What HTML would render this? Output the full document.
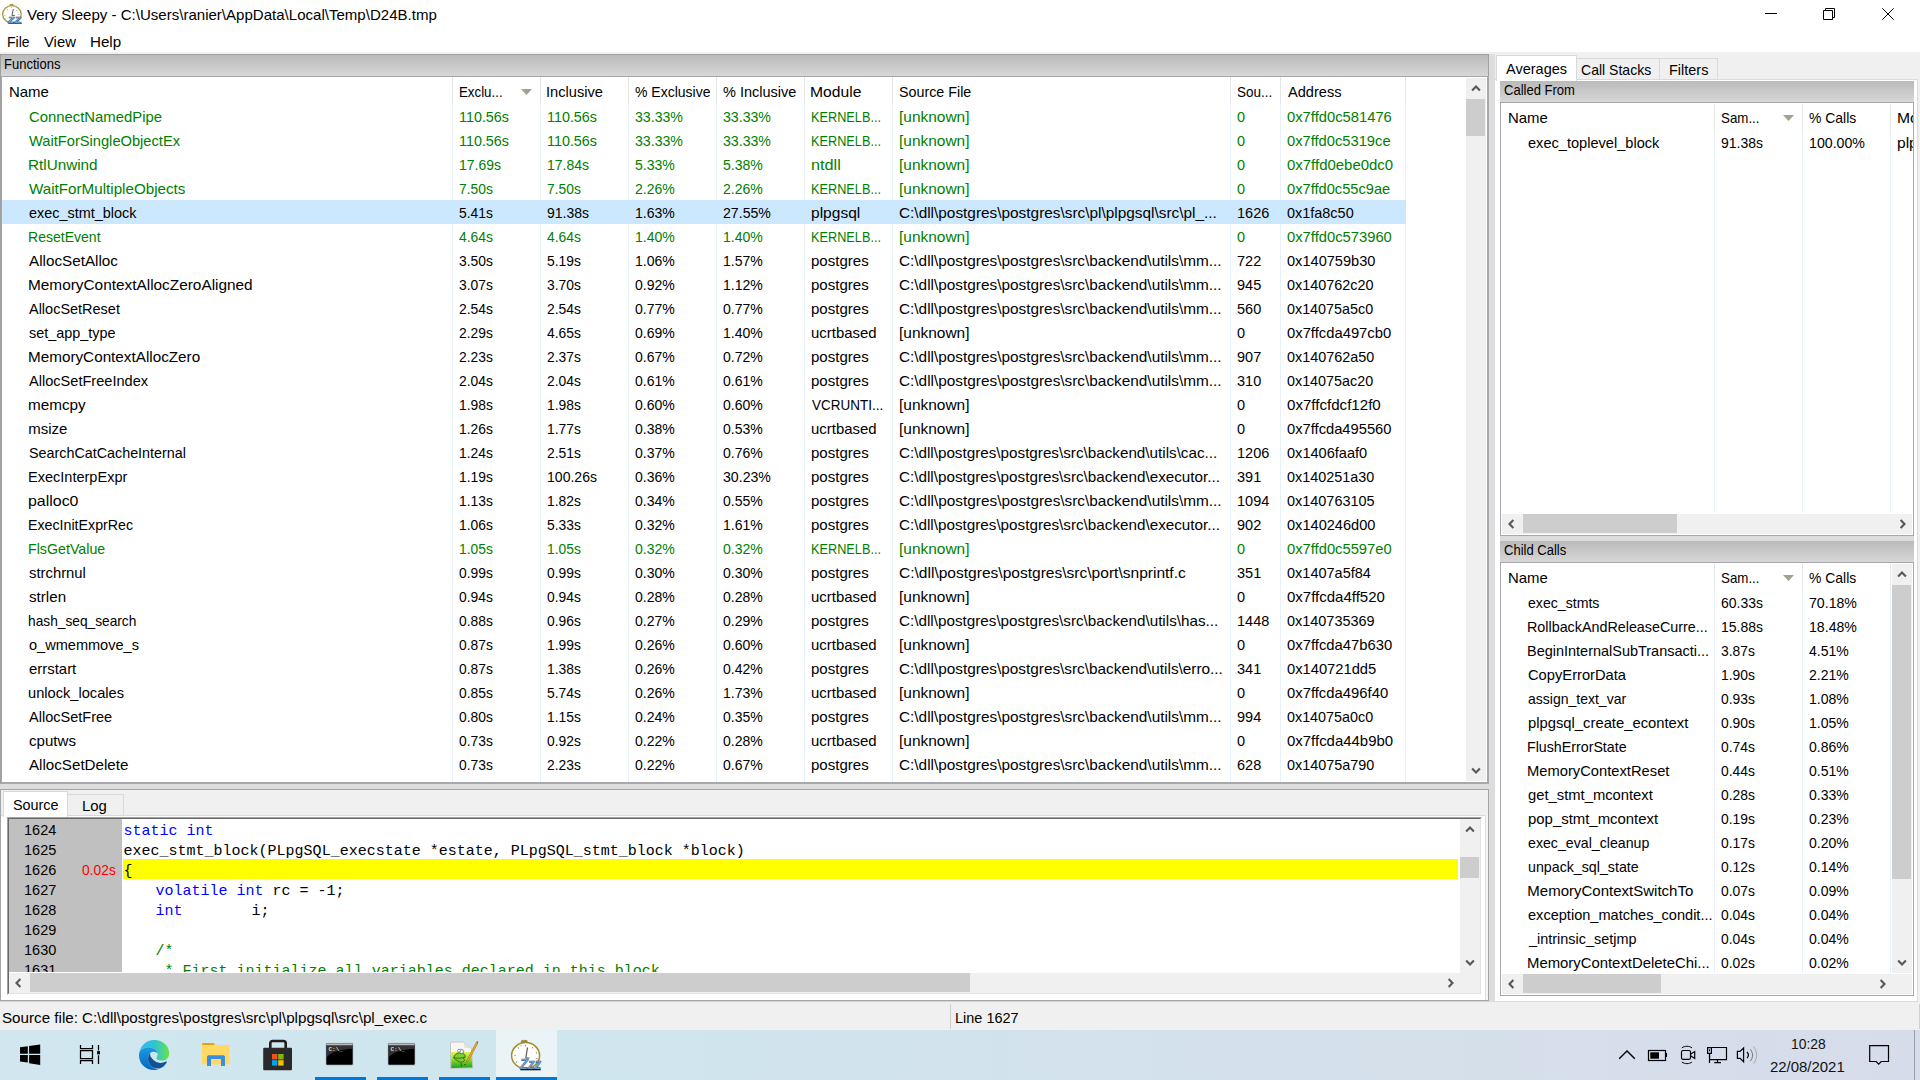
<!DOCTYPE html>
<html lang="en"><head><meta charset="utf-8"><title>Very Sleepy</title>
<style>
html,body{margin:0;padding:0;background:#fff;}
body{width:1920px;height:1080px;overflow:hidden;position:relative;font:15px/20px "Liberation Sans",sans-serif;color:#000;}
body div,body svg,body span{position:absolute;}
.t{white-space:pre;font-family:"Liberation Sans",sans-serif;line-height:20px;height:20px;transform-origin:0 0;}
.m{white-space:pre;font:15px/20px "Liberation Mono",monospace;height:20px;}
</style></head>
<body>
<div style="left:0px;top:0px;width:1920px;height:52px;background:#fff;"></div>
<svg style="left:1px;top:3px" width="22" height="22" viewBox="0 0 22 22">
<rect x="8.600" y="0.900" width="4" height="2.200" rx="1" fill="#9f963c"/>
<ellipse cx="10.900" cy="11.200" rx="9.300" ry="8.500" fill="#fff" stroke="#a3983a" stroke-width="1.200"/>
<path d="M10.900 12.400 L12.300 6 M10.900 12.400 L13.800 12.400" stroke="#5a5a5a" stroke-width="1" fill="none"/>
<g fill="#9a9a9a"><circle cx="6.300" cy="6.500" r=".5"/><circle cx="15.800" cy="7.500" r=".5"/><circle cx="3.800" cy="12.500" r=".5"/><circle cx="17.800" cy="11.500" r=".5"/><circle cx="10.500" cy="4.500" r=".5"/><circle cx="5" cy="15.500" r=".5"/></g>
<rect x="7.200" y="19.600" width="13.600" height="1.100" fill="#1a2232"/><text x="6.800" y="20.200" font-family="Liberation Sans,sans-serif" font-weight="bold" font-style="italic" font-size="11.500" textLength="13.600" lengthAdjust="spacingAndGlyphs" fill="#86bcec" stroke="#2a4468" stroke-width=".45">zz</text>
</svg>
<span class="t" style="left:27.23px;top:5.00px;transform:scaleX(1.0032);">Very Sleepy - C:\Users\ranier\AppData\Local\Temp\D24B.tmp</span>
<svg style="left:1760px;top:4px" width="140" height="20" viewBox="0 0 140 20" fill="none" stroke="#000" stroke-width="1">
<path d="M5 9.5h12"/>
<path d="M63.5 6.5h9v9h-9z M65.5 6.500v-2h9v9h-2"/>
<path d="M122.3 4.3l11.4 11.4 M133.7 4.3l-11.4 11.4"/>
</svg>
<span class="t" style="left:6.75px;top:32.00px;transform:scaleX(0.9343);">File</span>
<span class="t" style="left:43.93px;top:32.00px;transform:scaleX(0.9880);">View</span>
<span class="t" style="left:89.76px;top:32.00px;transform:scaleX(1.0101);">Help</span>
<div style="left:0px;top:52px;width:1920px;height:978px;background:#f0f0f0;"></div>
<div style="left:0px;top:54px;width:1489px;height:730px;background:#a0a0a0;"></div>
<div style="left:1px;top:55px;width:1487px;height:21px;background:linear-gradient(#bababa,#d7d7d7);"></div><span class="t" style="left:4.13px;top:54.00px;font-size:14px;transform:scaleX(0.9300);">Functions</span>
<div style="left:1px;top:76px;width:1488px;height:708px;background:#a6a8ac;"></div>
<div style="left:2px;top:77px;width:1485px;height:705px;background:#fff;"></div>
<div style="left:452px;top:77px;width:1px;height:27px;background:#e5e5e5;"></div>
<div style="left:452px;top:104px;width:1px;height:678px;background:#e8f1fb;"></div>
<div style="left:540px;top:77px;width:1px;height:27px;background:#e5e5e5;"></div>
<div style="left:540px;top:104px;width:1px;height:678px;background:#e8f1fb;"></div>
<div style="left:628px;top:77px;width:1px;height:27px;background:#e5e5e5;"></div>
<div style="left:628px;top:104px;width:1px;height:678px;background:#e8f1fb;"></div>
<div style="left:716px;top:77px;width:1px;height:27px;background:#e5e5e5;"></div>
<div style="left:716px;top:104px;width:1px;height:678px;background:#e8f1fb;"></div>
<div style="left:804px;top:77px;width:1px;height:27px;background:#e5e5e5;"></div>
<div style="left:804px;top:104px;width:1px;height:678px;background:#e8f1fb;"></div>
<div style="left:892px;top:77px;width:1px;height:27px;background:#e5e5e5;"></div>
<div style="left:892px;top:104px;width:1px;height:678px;background:#e8f1fb;"></div>
<div style="left:1230px;top:77px;width:1px;height:27px;background:#e5e5e5;"></div>
<div style="left:1230px;top:104px;width:1px;height:678px;background:#e8f1fb;"></div>
<div style="left:1280px;top:77px;width:1px;height:27px;background:#e5e5e5;"></div>
<div style="left:1280px;top:104px;width:1px;height:678px;background:#e8f1fb;"></div>
<div style="left:1405px;top:77px;width:1px;height:27px;background:#e5e5e5;"></div>
<div style="left:1405px;top:104px;width:1px;height:678px;background:#e8f1fb;"></div>
<span class="t" style="left:8.57px;top:82.00px;transform:scaleX(0.9966);">Name</span>
<span class="t" style="left:458.51px;top:82.00px;transform:scaleX(0.8860);">Exclu...</span>
<span class="t" style="left:546.25px;top:82.00px;transform:scaleX(0.9752);">Inclusive</span>
<span class="t" style="left:635.10px;top:82.00px;transform:scaleX(0.9329);">% Exclusive</span>
<span class="t" style="left:723.08px;top:82.00px;transform:scaleX(0.9676);">% Inclusive</span>
<span class="t" style="left:810.31px;top:82.00px;transform:scaleX(1.0445);">Module</span>
<span class="t" style="left:898.95px;top:82.00px;transform:scaleX(0.9525);">Source File</span>
<span class="t" style="left:1236.99px;top:82.00px;transform:scaleX(0.8992);">Sou...</span>
<span class="t" style="left:1287.57px;top:82.00px;transform:scaleX(0.9717);">Address</span>
<svg style="left:521px;top:89px" width="11" height="6" viewBox="0 0 11 6"><polygon points="0,0 11,0 5.5,6" fill="#a3a292"/></svg>
<span class="t" style="left:28.55px;top:107.00px;color:#008000;transform:scaleX(0.9908);">ConnectNamedPipe</span>
<span class="t" style="left:458.51px;top:107.00px;color:#008000;transform:scaleX(0.9569);">110.56s</span>
<span class="t" style="left:546.51px;top:107.00px;color:#008000;transform:scaleX(0.9569);">110.56s</span>
<span class="t" style="left:635.06px;top:107.00px;color:#008000;transform:scaleX(0.9415);">33.33%</span>
<span class="t" style="left:723.06px;top:107.00px;color:#008000;transform:scaleX(0.9415);">33.33%</span>
<span class="t" style="left:810.56px;top:107.00px;color:#008000;transform:scaleX(0.8481);">KERNELB...</span>
<span class="t" style="left:898.50px;top:107.00px;color:#008000;transform:scaleX(1.0314);">[unknown]</span>
<span class="t" style="left:1237.03px;top:107.00px;color:#008000;transform:scaleX(0.9669);">0</span>
<span class="t" style="left:1287.02px;top:107.00px;color:#008000;transform:scaleX(0.9845);">0x7ffd0c581476</span>
<span class="t" style="left:29.24px;top:131.00px;color:#008000;transform:scaleX(0.9775);">WaitForSingleObjectEx</span>
<span class="t" style="left:458.51px;top:131.00px;color:#008000;transform:scaleX(0.9569);">110.56s</span>
<span class="t" style="left:546.51px;top:131.00px;color:#008000;transform:scaleX(0.9569);">110.56s</span>
<span class="t" style="left:635.06px;top:131.00px;color:#008000;transform:scaleX(0.9415);">33.33%</span>
<span class="t" style="left:723.06px;top:131.00px;color:#008000;transform:scaleX(0.9415);">33.33%</span>
<span class="t" style="left:810.56px;top:131.00px;color:#008000;transform:scaleX(0.8481);">KERNELB...</span>
<span class="t" style="left:898.50px;top:131.00px;color:#008000;transform:scaleX(1.0314);">[unknown]</span>
<span class="t" style="left:1237.03px;top:131.00px;color:#008000;transform:scaleX(0.9669);">0</span>
<span class="t" style="left:1287.03px;top:131.00px;color:#008000;transform:scaleX(0.9805);">0x7ffd0c5319ce</span>
<span class="t" style="left:28.05px;top:155.00px;color:#008000;transform:scaleX(1.0172);">RtlUnwind</span>
<span class="t" style="left:458.54px;top:155.00px;color:#008000;transform:scaleX(0.9314);">17.69s</span>
<span class="t" style="left:546.54px;top:155.00px;color:#008000;transform:scaleX(0.9314);">17.84s</span>
<span class="t" style="left:635.04px;top:155.00px;color:#008000;transform:scaleX(0.9365);">5.33%</span>
<span class="t" style="left:723.04px;top:155.00px;color:#008000;transform:scaleX(0.9365);">5.38%</span>
<span class="t" style="left:810.52px;top:155.00px;color:#008000;transform:scaleX(1.0847);">ntdll</span>
<span class="t" style="left:898.50px;top:155.00px;color:#008000;transform:scaleX(1.0314);">[unknown]</span>
<span class="t" style="left:1237.03px;top:155.00px;color:#008000;transform:scaleX(0.9669);">0</span>
<span class="t" style="left:1287.02px;top:155.00px;color:#008000;transform:scaleX(0.9967);">0x7ffd0ebe0dc0</span>
<span class="t" style="left:29.23px;top:179.00px;color:#008000;transform:scaleX(1.0125);">WaitForMultipleObjects</span>
<span class="t" style="left:458.89px;top:179.00px;color:#008000;transform:scaleX(0.9233);">7.50s</span>
<span class="t" style="left:546.89px;top:179.00px;color:#008000;transform:scaleX(0.9233);">7.50s</span>
<span class="t" style="left:634.89px;top:179.00px;color:#008000;transform:scaleX(0.9365);">2.26%</span>
<span class="t" style="left:722.89px;top:179.00px;color:#008000;transform:scaleX(0.9365);">2.26%</span>
<span class="t" style="left:810.56px;top:179.00px;color:#008000;transform:scaleX(0.8481);">KERNELB...</span>
<span class="t" style="left:898.50px;top:179.00px;color:#008000;transform:scaleX(1.0314);">[unknown]</span>
<span class="t" style="left:1237.03px;top:179.00px;color:#008000;transform:scaleX(0.9669);">0</span>
<span class="t" style="left:1287.03px;top:179.00px;color:#008000;transform:scaleX(0.9770);">0x7ffd0c55c9ae</span>
<div style="left:2px;top:200px;width:1404px;height:24px;background:#cce8ff;"></div>
<span class="t" style="left:28.69px;top:203.00px;transform:scaleX(0.9613);">exec_stmt_block</span>
<span class="t" style="left:459.05px;top:203.00px;transform:scaleX(0.9233);">5.41s</span>
<span class="t" style="left:546.95px;top:203.00px;transform:scaleX(0.9314);">91.38s</span>
<span class="t" style="left:634.53px;top:203.00px;transform:scaleX(0.9365);">1.63%</span>
<span class="t" style="left:722.89px;top:203.00px;transform:scaleX(0.9415);">27.55%</span>
<span class="t" style="left:810.60px;top:203.00px;transform:scaleX(1.0359);">plpgsql</span>
<span class="t" style="left:898.82px;top:203.00px;transform:scaleX(1.0248);">C:\dll\postgres\postgres\src\pl\plpgsql\src\pl_...</span>
<span class="t" style="left:1236.50px;top:203.00px;transform:scaleX(0.9669);">1626</span>
<span class="t" style="left:1287.04px;top:203.00px;transform:scaleX(0.9630);">0x1fa8c50</span>
<span class="t" style="left:28.15px;top:227.00px;color:#008000;transform:scaleX(0.9357);">ResetEvent</span>
<span class="t" style="left:459.28px;top:227.00px;color:#008000;transform:scaleX(0.9233);">4.64s</span>
<span class="t" style="left:547.28px;top:227.00px;color:#008000;transform:scaleX(0.9233);">4.64s</span>
<span class="t" style="left:634.53px;top:227.00px;color:#008000;transform:scaleX(0.9365);">1.40%</span>
<span class="t" style="left:722.53px;top:227.00px;color:#008000;transform:scaleX(0.9365);">1.40%</span>
<span class="t" style="left:810.56px;top:227.00px;color:#008000;transform:scaleX(0.8481);">KERNELB...</span>
<span class="t" style="left:898.50px;top:227.00px;color:#008000;transform:scaleX(1.0314);">[unknown]</span>
<span class="t" style="left:1237.03px;top:227.00px;color:#008000;transform:scaleX(0.9669);">0</span>
<span class="t" style="left:1287.02px;top:227.00px;color:#008000;transform:scaleX(0.9845);">0x7ffd0c573960</span>
<span class="t" style="left:29.27px;top:251.00px;transform:scaleX(1.0159);">AllocSetAlloc</span>
<span class="t" style="left:459.07px;top:251.00px;transform:scaleX(0.9233);">3.50s</span>
<span class="t" style="left:547.05px;top:251.00px;transform:scaleX(0.9233);">5.19s</span>
<span class="t" style="left:634.53px;top:251.00px;transform:scaleX(0.9365);">1.06%</span>
<span class="t" style="left:722.53px;top:251.00px;transform:scaleX(0.9365);">1.57%</span>
<span class="t" style="left:810.63px;top:251.00px;transform:scaleX(1.0029);">postgres</span>
<span class="t" style="left:898.82px;top:251.00px;transform:scaleX(1.0237);">C:\dll\postgres\postgres\src\backend\utils\mm...</span>
<span class="t" style="left:1236.86px;top:251.00px;transform:scaleX(0.9669);">722</span>
<span class="t" style="left:1287.03px;top:251.00px;transform:scaleX(0.9723);">0x140759b30</span>
<span class="t" style="left:28.04px;top:275.00px;transform:scaleX(1.0246);">MemoryContextAllocZeroAligned</span>
<span class="t" style="left:459.07px;top:275.00px;transform:scaleX(0.9233);">3.07s</span>
<span class="t" style="left:547.07px;top:275.00px;transform:scaleX(0.9233);">3.70s</span>
<span class="t" style="left:635.05px;top:275.00px;transform:scaleX(0.9365);">0.92%</span>
<span class="t" style="left:722.53px;top:275.00px;transform:scaleX(0.9365);">1.12%</span>
<span class="t" style="left:810.63px;top:275.00px;transform:scaleX(1.0029);">postgres</span>
<span class="t" style="left:898.82px;top:275.00px;transform:scaleX(1.0237);">C:\dll\postgres\postgres\src\backend\utils\mm...</span>
<span class="t" style="left:1236.92px;top:275.00px;transform:scaleX(0.9669);">945</span>
<span class="t" style="left:1287.04px;top:275.00px;transform:scaleX(0.9603);">0x140762c20</span>
<span class="t" style="left:29.27px;top:299.00px;transform:scaleX(0.9652);">AllocSetReset</span>
<span class="t" style="left:458.90px;top:299.00px;transform:scaleX(0.9233);">2.54s</span>
<span class="t" style="left:546.90px;top:299.00px;transform:scaleX(0.9233);">2.54s</span>
<span class="t" style="left:635.05px;top:299.00px;transform:scaleX(0.9365);">0.77%</span>
<span class="t" style="left:723.05px;top:299.00px;transform:scaleX(0.9365);">0.77%</span>
<span class="t" style="left:810.63px;top:299.00px;transform:scaleX(1.0029);">postgres</span>
<span class="t" style="left:898.82px;top:299.00px;transform:scaleX(1.0237);">C:\dll\postgres\postgres\src\backend\utils\mm...</span>
<span class="t" style="left:1237.02px;top:299.00px;transform:scaleX(0.9669);">560</span>
<span class="t" style="left:1287.04px;top:299.00px;transform:scaleX(0.9561);">0x14075a5c0</span>
<span class="t" style="left:28.90px;top:323.00px;transform:scaleX(0.9608);">set_app_type</span>
<span class="t" style="left:458.90px;top:323.00px;transform:scaleX(0.9233);">2.29s</span>
<span class="t" style="left:547.28px;top:323.00px;transform:scaleX(0.9233);">4.65s</span>
<span class="t" style="left:635.05px;top:323.00px;transform:scaleX(0.9365);">0.69%</span>
<span class="t" style="left:722.53px;top:323.00px;transform:scaleX(0.9365);">1.40%</span>
<span class="t" style="left:810.63px;top:323.00px;transform:scaleX(0.9965);">ucrtbased</span>
<span class="t" style="left:898.50px;top:323.00px;transform:scaleX(1.0314);">[unknown]</span>
<span class="t" style="left:1237.03px;top:323.00px;transform:scaleX(0.9669);">0</span>
<span class="t" style="left:1287.02px;top:323.00px;transform:scaleX(0.9863);">0x7ffcda497cb0</span>
<span class="t" style="left:28.05px;top:347.00px;transform:scaleX(1.0175);">MemoryContextAllocZero</span>
<span class="t" style="left:458.90px;top:347.00px;transform:scaleX(0.9233);">2.23s</span>
<span class="t" style="left:546.90px;top:347.00px;transform:scaleX(0.9233);">2.37s</span>
<span class="t" style="left:635.05px;top:347.00px;transform:scaleX(0.9365);">0.67%</span>
<span class="t" style="left:723.05px;top:347.00px;transform:scaleX(0.9365);">0.72%</span>
<span class="t" style="left:810.63px;top:347.00px;transform:scaleX(1.0029);">postgres</span>
<span class="t" style="left:898.82px;top:347.00px;transform:scaleX(1.0237);">C:\dll\postgres\postgres\src\backend\utils\mm...</span>
<span class="t" style="left:1236.92px;top:347.00px;transform:scaleX(0.9669);">907</span>
<span class="t" style="left:1287.04px;top:347.00px;transform:scaleX(0.9592);">0x140762a50</span>
<span class="t" style="left:29.27px;top:371.00px;transform:scaleX(0.9716);">AllocSetFreeIndex</span>
<span class="t" style="left:458.90px;top:371.00px;transform:scaleX(0.9233);">2.04s</span>
<span class="t" style="left:546.90px;top:371.00px;transform:scaleX(0.9233);">2.04s</span>
<span class="t" style="left:635.05px;top:371.00px;transform:scaleX(0.9365);">0.61%</span>
<span class="t" style="left:723.05px;top:371.00px;transform:scaleX(0.9365);">0.61%</span>
<span class="t" style="left:810.63px;top:371.00px;transform:scaleX(1.0029);">postgres</span>
<span class="t" style="left:898.82px;top:371.00px;transform:scaleX(1.0237);">C:\dll\postgres\postgres\src\backend\utils\mm...</span>
<span class="t" style="left:1237.05px;top:371.00px;transform:scaleX(0.9669);">310</span>
<span class="t" style="left:1287.04px;top:371.00px;transform:scaleX(0.9561);">0x14075ac20</span>
<span class="t" style="left:28.29px;top:395.00px;transform:scaleX(1.0188);">memcpy</span>
<span class="t" style="left:458.55px;top:395.00px;transform:scaleX(0.9233);">1.98s</span>
<span class="t" style="left:546.55px;top:395.00px;transform:scaleX(0.9233);">1.98s</span>
<span class="t" style="left:635.05px;top:395.00px;transform:scaleX(0.9365);">0.60%</span>
<span class="t" style="left:723.05px;top:395.00px;transform:scaleX(0.9365);">0.60%</span>
<span class="t" style="left:811.54px;top:395.00px;transform:scaleX(0.8998);">VCRUNTI...</span>
<span class="t" style="left:898.50px;top:395.00px;transform:scaleX(1.0314);">[unknown]</span>
<span class="t" style="left:1237.03px;top:395.00px;transform:scaleX(0.9669);">0</span>
<span class="t" style="left:1287.01px;top:395.00px;transform:scaleX(1.0067);">0x7ffcfdcf12f0</span>
<span class="t" style="left:28.30px;top:419.00px;">msize</span>
<span class="t" style="left:458.55px;top:419.00px;transform:scaleX(0.9233);">1.26s</span>
<span class="t" style="left:546.55px;top:419.00px;transform:scaleX(0.9233);">1.77s</span>
<span class="t" style="left:635.05px;top:419.00px;transform:scaleX(0.9365);">0.38%</span>
<span class="t" style="left:723.05px;top:419.00px;transform:scaleX(0.9365);">0.53%</span>
<span class="t" style="left:810.63px;top:419.00px;transform:scaleX(0.9965);">ucrtbased</span>
<span class="t" style="left:898.50px;top:419.00px;transform:scaleX(1.0314);">[unknown]</span>
<span class="t" style="left:1237.03px;top:419.00px;transform:scaleX(0.9669);">0</span>
<span class="t" style="left:1287.03px;top:419.00px;transform:scaleX(0.9810);">0x7ffcda495560</span>
<span class="t" style="left:28.65px;top:443.00px;transform:scaleX(0.9552);">SearchCatCacheInternal</span>
<span class="t" style="left:458.55px;top:443.00px;transform:scaleX(0.9233);">1.24s</span>
<span class="t" style="left:546.90px;top:443.00px;transform:scaleX(0.9233);">2.51s</span>
<span class="t" style="left:635.05px;top:443.00px;transform:scaleX(0.9365);">0.37%</span>
<span class="t" style="left:723.05px;top:443.00px;transform:scaleX(0.9365);">0.76%</span>
<span class="t" style="left:810.63px;top:443.00px;transform:scaleX(1.0029);">postgres</span>
<span class="t" style="left:898.83px;top:443.00px;transform:scaleX(1.0153);">C:\dll\postgres\postgres\src\backend\utils\cac...</span>
<span class="t" style="left:1236.50px;top:443.00px;transform:scaleX(0.9669);">1206</span>
<span class="t" style="left:1287.03px;top:443.00px;transform:scaleX(0.9708);">0x1406faaf0</span>
<span class="t" style="left:28.11px;top:467.00px;transform:scaleX(0.9686);">ExecInterpExpr</span>
<span class="t" style="left:458.55px;top:467.00px;transform:scaleX(0.9233);">1.19s</span>
<span class="t" style="left:546.53px;top:467.00px;transform:scaleX(0.9369);">100.26s</span>
<span class="t" style="left:635.05px;top:467.00px;transform:scaleX(0.9365);">0.36%</span>
<span class="t" style="left:723.06px;top:467.00px;transform:scaleX(0.9415);">30.23%</span>
<span class="t" style="left:810.63px;top:467.00px;transform:scaleX(1.0029);">postgres</span>
<span class="t" style="left:898.83px;top:467.00px;transform:scaleX(1.0158);">C:\dll\postgres\postgres\src\backend\executor...</span>
<span class="t" style="left:1237.05px;top:467.00px;transform:scaleX(0.9669);">391</span>
<span class="t" style="left:1287.04px;top:467.00px;transform:scaleX(0.9592);">0x140251a30</span>
<span class="t" style="left:28.27px;top:491.00px;transform:scaleX(1.0613);">palloc0</span>
<span class="t" style="left:458.55px;top:491.00px;transform:scaleX(0.9233);">1.13s</span>
<span class="t" style="left:546.55px;top:491.00px;transform:scaleX(0.9233);">1.82s</span>
<span class="t" style="left:635.05px;top:491.00px;transform:scaleX(0.9365);">0.34%</span>
<span class="t" style="left:723.05px;top:491.00px;transform:scaleX(0.9365);">0.55%</span>
<span class="t" style="left:810.63px;top:491.00px;transform:scaleX(1.0029);">postgres</span>
<span class="t" style="left:898.82px;top:491.00px;transform:scaleX(1.0237);">C:\dll\postgres\postgres\src\backend\utils\mm...</span>
<span class="t" style="left:1236.50px;top:491.00px;transform:scaleX(0.9669);">1094</span>
<span class="t" style="left:1287.04px;top:491.00px;transform:scaleX(0.9634);">0x140763105</span>
<span class="t" style="left:28.13px;top:515.00px;transform:scaleX(0.9474);">ExecInitExprRec</span>
<span class="t" style="left:458.55px;top:515.00px;transform:scaleX(0.9233);">1.06s</span>
<span class="t" style="left:547.05px;top:515.00px;transform:scaleX(0.9233);">5.33s</span>
<span class="t" style="left:635.05px;top:515.00px;transform:scaleX(0.9365);">0.32%</span>
<span class="t" style="left:722.53px;top:515.00px;transform:scaleX(0.9365);">1.61%</span>
<span class="t" style="left:810.63px;top:515.00px;transform:scaleX(1.0029);">postgres</span>
<span class="t" style="left:898.83px;top:515.00px;transform:scaleX(1.0158);">C:\dll\postgres\postgres\src\backend\executor...</span>
<span class="t" style="left:1236.92px;top:515.00px;transform:scaleX(0.9669);">902</span>
<span class="t" style="left:1287.03px;top:515.00px;transform:scaleX(0.9723);">0x140246d00</span>
<span class="t" style="left:28.13px;top:539.00px;color:#008000;transform:scaleX(0.9481);">FlsGetValue</span>
<span class="t" style="left:458.55px;top:539.00px;color:#008000;transform:scaleX(0.9233);">1.05s</span>
<span class="t" style="left:546.55px;top:539.00px;color:#008000;transform:scaleX(0.9233);">1.05s</span>
<span class="t" style="left:635.05px;top:539.00px;color:#008000;transform:scaleX(0.9365);">0.32%</span>
<span class="t" style="left:723.05px;top:539.00px;color:#008000;transform:scaleX(0.9365);">0.32%</span>
<span class="t" style="left:810.56px;top:539.00px;color:#008000;transform:scaleX(0.8481);">KERNELB...</span>
<span class="t" style="left:898.50px;top:539.00px;color:#008000;transform:scaleX(1.0314);">[unknown]</span>
<span class="t" style="left:1237.03px;top:539.00px;color:#008000;transform:scaleX(0.9669);">0</span>
<span class="t" style="left:1287.02px;top:539.00px;color:#008000;transform:scaleX(0.9830);">0x7ffd0c5597e0</span>
<span class="t" style="left:28.89px;top:563.00px;transform:scaleX(0.9893);">strchrnul</span>
<span class="t" style="left:459.06px;top:563.00px;transform:scaleX(0.9233);">0.99s</span>
<span class="t" style="left:547.06px;top:563.00px;transform:scaleX(0.9233);">0.99s</span>
<span class="t" style="left:635.05px;top:563.00px;transform:scaleX(0.9365);">0.30%</span>
<span class="t" style="left:723.05px;top:563.00px;transform:scaleX(0.9365);">0.30%</span>
<span class="t" style="left:810.63px;top:563.00px;transform:scaleX(1.0029);">postgres</span>
<span class="t" style="left:898.81px;top:563.00px;transform:scaleX(1.0361);">C:\dll\postgres\postgres\src\port\snprintf.c</span>
<span class="t" style="left:1237.05px;top:563.00px;transform:scaleX(0.9669);">351</span>
<span class="t" style="left:1287.03px;top:563.00px;transform:scaleX(0.9669);">0x1407a5f84</span>
<span class="t" style="left:28.88px;top:587.00px;transform:scaleX(1.0116);">strlen</span>
<span class="t" style="left:459.06px;top:587.00px;transform:scaleX(0.9233);">0.94s</span>
<span class="t" style="left:547.06px;top:587.00px;transform:scaleX(0.9233);">0.94s</span>
<span class="t" style="left:635.05px;top:587.00px;transform:scaleX(0.9365);">0.28%</span>
<span class="t" style="left:723.05px;top:587.00px;transform:scaleX(0.9365);">0.28%</span>
<span class="t" style="left:810.63px;top:587.00px;transform:scaleX(0.9965);">ucrtbased</span>
<span class="t" style="left:898.50px;top:587.00px;transform:scaleX(1.0314);">[unknown]</span>
<span class="t" style="left:1237.03px;top:587.00px;transform:scaleX(0.9669);">0</span>
<span class="t" style="left:1287.01px;top:587.00px;">0x7ffcda4ff520</span>
<span class="t" style="left:28.35px;top:611.00px;transform:scaleX(0.9149);">hash_seq_search</span>
<span class="t" style="left:459.06px;top:611.00px;transform:scaleX(0.9233);">0.88s</span>
<span class="t" style="left:547.06px;top:611.00px;transform:scaleX(0.9233);">0.96s</span>
<span class="t" style="left:635.05px;top:611.00px;transform:scaleX(0.9365);">0.27%</span>
<span class="t" style="left:723.05px;top:611.00px;transform:scaleX(0.9365);">0.29%</span>
<span class="t" style="left:810.63px;top:611.00px;transform:scaleX(1.0029);">postgres</span>
<span class="t" style="left:898.83px;top:611.00px;transform:scaleX(1.0157);">C:\dll\postgres\postgres\src\backend\utils\has...</span>
<span class="t" style="left:1236.50px;top:611.00px;transform:scaleX(0.9669);">1448</span>
<span class="t" style="left:1287.04px;top:611.00px;transform:scaleX(0.9634);">0x140735369</span>
<span class="t" style="left:28.69px;top:635.00px;transform:scaleX(0.9697);">o_wmemmove_s</span>
<span class="t" style="left:459.06px;top:635.00px;transform:scaleX(0.9233);">0.87s</span>
<span class="t" style="left:546.55px;top:635.00px;transform:scaleX(0.9233);">1.99s</span>
<span class="t" style="left:635.05px;top:635.00px;transform:scaleX(0.9365);">0.26%</span>
<span class="t" style="left:723.05px;top:635.00px;transform:scaleX(0.9365);">0.60%</span>
<span class="t" style="left:810.63px;top:635.00px;transform:scaleX(0.9965);">ucrtbased</span>
<span class="t" style="left:898.50px;top:635.00px;transform:scaleX(1.0314);">[unknown]</span>
<span class="t" style="left:1237.03px;top:635.00px;transform:scaleX(0.9669);">0</span>
<span class="t" style="left:1287.02px;top:635.00px;transform:scaleX(0.9887);">0x7ffcda47b630</span>
<span class="t" style="left:28.67px;top:659.00px;transform:scaleX(0.9944);">errstart</span>
<span class="t" style="left:459.06px;top:659.00px;transform:scaleX(0.9233);">0.87s</span>
<span class="t" style="left:546.55px;top:659.00px;transform:scaleX(0.9233);">1.38s</span>
<span class="t" style="left:635.05px;top:659.00px;transform:scaleX(0.9365);">0.26%</span>
<span class="t" style="left:723.05px;top:659.00px;transform:scaleX(0.9365);">0.42%</span>
<span class="t" style="left:810.63px;top:659.00px;transform:scaleX(1.0029);">postgres</span>
<span class="t" style="left:898.82px;top:659.00px;transform:scaleX(1.0223);">C:\dll\postgres\postgres\src\backend\utils\erro...</span>
<span class="t" style="left:1237.05px;top:659.00px;transform:scaleX(0.9669);">341</span>
<span class="t" style="left:1287.03px;top:659.00px;transform:scaleX(0.9813);">0x140721dd5</span>
<span class="t" style="left:28.35px;top:683.00px;transform:scaleX(0.9754);">unlock_locales</span>
<span class="t" style="left:459.06px;top:683.00px;transform:scaleX(0.9233);">0.85s</span>
<span class="t" style="left:547.05px;top:683.00px;transform:scaleX(0.9233);">5.74s</span>
<span class="t" style="left:635.05px;top:683.00px;transform:scaleX(0.9365);">0.26%</span>
<span class="t" style="left:722.53px;top:683.00px;transform:scaleX(0.9365);">1.73%</span>
<span class="t" style="left:810.63px;top:683.00px;transform:scaleX(0.9965);">ucrtbased</span>
<span class="t" style="left:898.50px;top:683.00px;transform:scaleX(1.0314);">[unknown]</span>
<span class="t" style="left:1237.03px;top:683.00px;transform:scaleX(0.9669);">0</span>
<span class="t" style="left:1287.02px;top:683.00px;transform:scaleX(0.9884);">0x7ffcda496f40</span>
<span class="t" style="left:29.27px;top:707.00px;transform:scaleX(0.9686);">AllocSetFree</span>
<span class="t" style="left:459.06px;top:707.00px;transform:scaleX(0.9233);">0.80s</span>
<span class="t" style="left:546.55px;top:707.00px;transform:scaleX(0.9233);">1.15s</span>
<span class="t" style="left:635.05px;top:707.00px;transform:scaleX(0.9365);">0.24%</span>
<span class="t" style="left:723.05px;top:707.00px;transform:scaleX(0.9365);">0.35%</span>
<span class="t" style="left:810.63px;top:707.00px;transform:scaleX(1.0029);">postgres</span>
<span class="t" style="left:898.82px;top:707.00px;transform:scaleX(1.0237);">C:\dll\postgres\postgres\src\backend\utils\mm...</span>
<span class="t" style="left:1236.92px;top:707.00px;transform:scaleX(0.9669);">994</span>
<span class="t" style="left:1287.04px;top:707.00px;transform:scaleX(0.9561);">0x14075a0c0</span>
<span class="t" style="left:28.66px;top:731.00px;transform:scaleX(1.0065);">cputws</span>
<span class="t" style="left:459.06px;top:731.00px;transform:scaleX(0.9233);">0.73s</span>
<span class="t" style="left:547.06px;top:731.00px;transform:scaleX(0.9233);">0.92s</span>
<span class="t" style="left:635.05px;top:731.00px;transform:scaleX(0.9365);">0.22%</span>
<span class="t" style="left:723.05px;top:731.00px;transform:scaleX(0.9365);">0.28%</span>
<span class="t" style="left:810.63px;top:731.00px;transform:scaleX(0.9965);">ucrtbased</span>
<span class="t" style="left:898.50px;top:731.00px;transform:scaleX(1.0314);">[unknown]</span>
<span class="t" style="left:1237.03px;top:731.00px;transform:scaleX(0.9669);">0</span>
<span class="t" style="left:1287.02px;top:731.00px;transform:scaleX(0.9963);">0x7ffcda44b9b0</span>
<span class="t" style="left:29.27px;top:755.00px;transform:scaleX(1.0103);">AllocSetDelete</span>
<span class="t" style="left:459.06px;top:755.00px;transform:scaleX(0.9233);">0.73s</span>
<span class="t" style="left:546.90px;top:755.00px;transform:scaleX(0.9233);">2.23s</span>
<span class="t" style="left:635.05px;top:755.00px;transform:scaleX(0.9365);">0.22%</span>
<span class="t" style="left:723.05px;top:755.00px;transform:scaleX(0.9365);">0.67%</span>
<span class="t" style="left:810.63px;top:755.00px;transform:scaleX(1.0029);">postgres</span>
<span class="t" style="left:898.82px;top:755.00px;transform:scaleX(1.0237);">C:\dll\postgres\postgres\src\backend\utils\mm...</span>
<span class="t" style="left:1236.86px;top:755.00px;transform:scaleX(0.9669);">628</span>
<span class="t" style="left:1287.04px;top:755.00px;transform:scaleX(0.9592);">0x14075a790</span>
<div style="left:1466px;top:78px;width:20px;height:703px;background:#f0f0f0;"></div><div style="left:1466px;top:99px;width:19px;height:37px;background:#cdcdcd;"></div><svg style="left:1470.7px;top:85.0px" width="10" height="7" viewBox="0 0 10 7"><polyline points="1.1,5.4 5,1.5000000000000004 8.9,5.4" fill="none" stroke="#585858" stroke-width="2.1"/></svg><svg style="left:1470.7px;top:767.0px" width="10" height="7" viewBox="0 0 10 7"><polyline points="1.1,1.6 5,5.5 8.9,1.6" fill="none" stroke="#585858" stroke-width="2.1"/></svg>
<div style="left:0px;top:784px;width:1489px;height:5px;background:#dddddd;"></div>
<div style="left:1489px;top:54px;width:6px;height:948px;background:#dddddd;"></div>
<div style="left:0px;top:789px;width:1489px;height:212px;background:#f0f0f0;border:1px solid #a5a5a5;box-sizing:border-box;"></div>
<div style="left:1px;top:815px;width:1487px;height:185px;background:#fff;border-top:1px solid #dcdcdc;box-sizing:border-box;"></div>
<div style="left:67px;top:794px;width:57px;height:22px;background:#f0f0f0;border:1px solid #d9d9d9;box-sizing:border-box;"></div>
<div style="left:3px;top:791px;width:65px;height:26px;background:#fff;border:1px solid #d9d9d9;border-bottom:none;box-sizing:border-box;"></div>
<div style="left:1485px;top:815px;width:1px;height:185px;background:#dedede;"></div>
<div style="left:1486px;top:815px;width:2px;height:185px;background:#f6f6f6;"></div>
<span class="t" style="left:12.65px;top:795.00px;transform:scaleX(0.9582);">Source</span>
<span class="t" style="left:81.58px;top:796.00px;transform:scaleX(0.9928);">Log</span>
<div style="left:7px;top:817px;width:1475px;height:178px;background:#fff;border:1px solid #fff;border-top-color:#a0a0a0;border-left-color:#a0a0a0;box-sizing:border-box;"></div>
<div style="left:8px;top:818px;width:1473px;height:176px;background:#fff;border:1px solid #e3e3e3;border-top-color:#696969;border-left-color:#696969;box-sizing:border-box;"></div>
<div style="left:9px;top:819px;width:113px;height:153px;background:#c0c0c0;"></div>
<div style="left:123px;top:859px;width:1335px;height:20px;background:#ffff00;"></div>
<div style="left:9px;top:819px;width:1451px;height:153px;overflow:hidden"><span class="t" style="left:15.20px;top:1.00px;transform:scaleX(0.9669);">1624</span><span class="m" style="left:114.6px;top:3.0px;color:#0000ff">static int</span><span class="t" style="left:15.20px;top:21.00px;transform:scaleX(0.9669);">1625</span><span class="m" style="left:114.6px;top:23.0px;color:#000">exec_stmt_block(PLpgSQL_execstate *estate, PLpgSQL_stmt_block *block)</span><span class="t" style="left:15.20px;top:41.00px;transform:scaleX(0.9669);">1626</span><span class="t" style="left:73.06px;top:41.00px;color:#ff0000;transform:scaleX(0.9233);">0.02s</span><span class="m" style="left:114.6px;top:43.0px;color:#000">{</span><span class="t" style="left:15.20px;top:61.00px;transform:scaleX(0.9669);">1627</span><span class="m" style="left:146.6px;top:63.0px;color:#0000ff">volatile int</span><span class="m" style="left:254.6px;top:63.0px;color:#000"> rc = -1;</span><span class="t" style="left:15.20px;top:81.00px;transform:scaleX(0.9669);">1628</span><span class="m" style="left:146.6px;top:83.0px;color:#0000ff">int</span><span class="m" style="left:242.6px;top:83.0px;color:#000">i;</span><span class="t" style="left:15.20px;top:101.00px;transform:scaleX(0.9669);">1629</span><span class="t" style="left:15.20px;top:121.00px;transform:scaleX(0.9669);">1630</span><span class="m" style="left:146.6px;top:123.0px;color:#008000">/*</span><span class="t" style="left:15.20px;top:141.00px;transform:scaleX(0.9669);">1631</span><span class="m" style="left:146.6px;top:143.0px;color:#008000"> * First initialize all variables declared in this block</span></div>
<div style="left:1460px;top:819px;width:20px;height:154px;background:#f0f0f0;"></div><div style="left:1460px;top:857px;width:19px;height:21px;background:#cdcdcd;"></div><svg style="left:1464.7px;top:826.0px" width="10" height="7" viewBox="0 0 10 7"><polyline points="1.1,5.4 5,1.5000000000000004 8.9,5.4" fill="none" stroke="#585858" stroke-width="2.1"/></svg><svg style="left:1464.7px;top:959.0px" width="10" height="7" viewBox="0 0 10 7"><polyline points="1.1,1.6 5,5.5 8.9,1.6" fill="none" stroke="#585858" stroke-width="2.1"/></svg>
<div style="left:9px;top:973px;width:1451px;height:20px;background:#f0f0f0;"></div><div style="left:30px;top:973px;width:940px;height:19px;background:#cdcdcd;"></div><svg style="left:15.2px;top:977.7px" width="7" height="10" viewBox="0 0 7 10"><polyline points="5.4,1.1 1.5000000000000004,5 5.4,8.9" fill="none" stroke="#585858" stroke-width="2.1"/></svg><svg style="left:1446.8px;top:977.7px" width="7" height="10" viewBox="0 0 7 10"><polyline points="1.6,1.1 5.5,5 1.6,8.9" fill="none" stroke="#585858" stroke-width="2.1"/></svg>
<div style="left:1460px;top:973px;width:20px;height:20px;background:#f0f0f0;"></div>
<div style="left:1495px;top:54px;width:425px;height:948px;background:#f0f0f0;"></div>
<div style="left:1495px;top:79px;width:423px;height:923px;background:#fff;border:1px solid #dcdcdc;border-left:none;box-sizing:border-box;"></div>
<div style="left:1576px;top:58px;width:84px;height:22px;background:#f0f0f0;border:1px solid #d9d9d9;box-sizing:border-box;"></div>
<div style="left:1659px;top:58px;width:59px;height:22px;background:#f0f0f0;border:1px solid #d9d9d9;box-sizing:border-box;"></div>
<div style="left:1496px;top:55px;width:81px;height:26px;background:#fff;border:1px solid #d9d9d9;border-bottom:none;box-sizing:border-box;"></div>
<span class="t" style="left:1506.07px;top:59.00px;transform:scaleX(0.9669);">Averages</span>
<span class="t" style="left:1581.49px;top:60.00px;transform:scaleX(0.9358);">Call Stacks</span>
<span class="t" style="left:1668.51px;top:60.00px;transform:scaleX(0.9640);">Filters</span>
<div style="left:1500px;top:81px;width:414px;height:455px;background:#a6a8ac;"></div><div style="left:1500px;top:81px;width:414px;height:21px;background:linear-gradient(#bababa,#d7d7d7);"></div><span class="t" style="left:1503.64px;top:80.00px;font-size:14px;transform:scaleX(0.9300);">Called From</span><div style="left:1501px;top:103px;width:412px;height:432px;background:#fff;"></div>
<div style="left:1501px;top:103px;width:412px;height:410px;overflow:hidden">
<div style="left:213px;top:1px;width:1px;height:26px;background:#e5e5e5;"></div>
<div style="left:213px;top:27px;width:1px;height:400px;background:#e8f1fb;"></div>
<div style="left:301px;top:1px;width:1px;height:26px;background:#e5e5e5;"></div>
<div style="left:301px;top:27px;width:1px;height:400px;background:#e8f1fb;"></div>
<div style="left:389px;top:1px;width:1px;height:26px;background:#e5e5e5;"></div>
<div style="left:389px;top:27px;width:1px;height:400px;background:#e8f1fb;"></div>
<span class="t" style="left:6.67px;top:5.00px;transform:scaleX(0.9966);">Name</span>
<span class="t" style="left:219.99px;top:5.00px;transform:scaleX(0.8890);">Sam...</span>
<span class="t" style="left:308.30px;top:5.00px;transform:scaleX(0.9293);">% Calls</span>
<span class="t" style="left:395.51px;top:5.00px;transform:scaleX(1.0445);">Module</span>
<svg style="left:282px;top:12px" width="11" height="6" viewBox="0 0 11 6"><polygon points="0,0 11,0 5.5,6" fill="#a3a292"/></svg>
<span class="t" style="left:26.98px;top:30.00px;transform:scaleX(0.9721);">exec_toplevel_block</span>
<span class="t" style="left:219.95px;top:30.00px;transform:scaleX(0.9314);">91.38s</span>
<span class="t" style="left:307.52px;top:30.00px;transform:scaleX(0.9451);">100.00%</span>
<span class="t" style="left:395.60px;top:30.00px;transform:scaleX(1.0359);">plpgsql</span>
</div>
<div style="left:1502px;top:514px;width:410px;height:20px;background:#f0f0f0;"></div><div style="left:1523px;top:514px;width:154px;height:19px;background:#cdcdcd;"></div><svg style="left:1508.2px;top:518.7px" width="7" height="10" viewBox="0 0 7 10"><polyline points="5.4,1.1 1.5000000000000004,5 5.4,8.9" fill="none" stroke="#585858" stroke-width="2.1"/></svg><svg style="left:1898.8px;top:518.7px" width="7" height="10" viewBox="0 0 7 10"><polyline points="1.6,1.1 5.5,5 1.6,8.9" fill="none" stroke="#585858" stroke-width="2.1"/></svg>
<div style="left:1502px;top:534px;width:410px;height:1px;background:#fff;"></div>
<div style="left:1500px;top:536px;width:414px;height:5px;background:#dcdcdc;"></div>
<div style="left:1500px;top:541px;width:414px;height:455px;background:#a6a8ac;"></div><div style="left:1500px;top:541px;width:414px;height:21px;background:linear-gradient(#bababa,#d7d7d7);"></div><span class="t" style="left:1503.64px;top:540.00px;font-size:14px;transform:scaleX(0.9300);">Child Calls</span><div style="left:1501px;top:563px;width:412px;height:432px;background:#fff;"></div>
<div style="left:1501px;top:563px;width:391px;height:410px;overflow:hidden">
<div style="left:213px;top:1px;width:1px;height:26px;background:#e5e5e5;"></div>
<div style="left:213px;top:27px;width:1px;height:400px;background:#e8f1fb;"></div>
<div style="left:301px;top:1px;width:1px;height:26px;background:#e5e5e5;"></div>
<div style="left:301px;top:27px;width:1px;height:400px;background:#e8f1fb;"></div>
<div style="left:389px;top:1px;width:1px;height:26px;background:#e5e5e5;"></div>
<div style="left:389px;top:27px;width:1px;height:400px;background:#e8f1fb;"></div>
<span class="t" style="left:6.67px;top:5.00px;transform:scaleX(0.9966);">Name</span>
<span class="t" style="left:219.99px;top:5.00px;transform:scaleX(0.8890);">Sam...</span>
<span class="t" style="left:308.30px;top:5.00px;transform:scaleX(0.9293);">% Calls</span>
<svg style="left:282px;top:12px" width="11" height="6" viewBox="0 0 11 6"><polygon points="0,0 11,0 5.5,6" fill="#a3a292"/></svg>
<span class="t" style="left:27.00px;top:30.00px;transform:scaleX(0.9414);">exec_stmts</span>
<span class="t" style="left:219.89px;top:30.00px;transform:scaleX(0.9314);">60.33s</span>
<span class="t" style="left:307.88px;top:30.00px;transform:scaleX(0.9415);">70.18%</span>
<span class="t" style="left:26.43px;top:54.00px;transform:scaleX(0.9547);">RollbackAndReleaseCurre...</span>
<span class="t" style="left:219.54px;top:54.00px;transform:scaleX(0.9314);">15.88s</span>
<span class="t" style="left:307.52px;top:54.00px;transform:scaleX(0.9415);">18.48%</span>
<span class="t" style="left:26.41px;top:78.00px;transform:scaleX(0.9644);">BeginInternalSubTransacti...</span>
<span class="t" style="left:220.07px;top:78.00px;transform:scaleX(0.9233);">3.87s</span>
<span class="t" style="left:308.28px;top:78.00px;transform:scaleX(0.9365);">4.51%</span>
<span class="t" style="left:26.85px;top:102.00px;transform:scaleX(0.9801);">CopyErrorData</span>
<span class="t" style="left:219.55px;top:102.00px;transform:scaleX(0.9233);">1.90s</span>
<span class="t" style="left:307.89px;top:102.00px;transform:scaleX(0.9365);">2.21%</span>
<span class="t" style="left:27.00px;top:126.00px;transform:scaleX(0.9340);">assign_text_var</span>
<span class="t" style="left:220.06px;top:126.00px;transform:scaleX(0.9233);">0.93s</span>
<span class="t" style="left:307.53px;top:126.00px;transform:scaleX(0.9365);">1.08%</span>
<span class="t" style="left:26.65px;top:150.00px;transform:scaleX(0.9861);">plpgsql_create_econtext</span>
<span class="t" style="left:220.06px;top:150.00px;transform:scaleX(0.9233);">0.90s</span>
<span class="t" style="left:307.53px;top:150.00px;transform:scaleX(0.9365);">1.05%</span>
<span class="t" style="left:26.43px;top:174.00px;transform:scaleX(0.9482);">FlushErrorState</span>
<span class="t" style="left:220.06px;top:174.00px;transform:scaleX(0.9233);">0.74s</span>
<span class="t" style="left:308.05px;top:174.00px;transform:scaleX(0.9365);">0.86%</span>
<span class="t" style="left:26.39px;top:198.00px;transform:scaleX(0.9818);">MemoryContextReset</span>
<span class="t" style="left:220.06px;top:198.00px;transform:scaleX(0.9233);">0.44s</span>
<span class="t" style="left:308.05px;top:198.00px;transform:scaleX(0.9365);">0.51%</span>
<span class="t" style="left:26.98px;top:222.00px;transform:scaleX(0.9850);">get_stmt_mcontext</span>
<span class="t" style="left:220.06px;top:222.00px;transform:scaleX(0.9233);">0.28s</span>
<span class="t" style="left:308.05px;top:222.00px;transform:scaleX(0.9365);">0.33%</span>
<span class="t" style="left:26.64px;top:246.00px;transform:scaleX(0.9944);">pop_stmt_mcontext</span>
<span class="t" style="left:220.06px;top:246.00px;transform:scaleX(0.9233);">0.19s</span>
<span class="t" style="left:308.05px;top:246.00px;transform:scaleX(0.9365);">0.23%</span>
<span class="t" style="left:27.00px;top:270.00px;transform:scaleX(0.9444);">exec_eval_cleanup</span>
<span class="t" style="left:220.06px;top:270.00px;transform:scaleX(0.9233);">0.17s</span>
<span class="t" style="left:308.05px;top:270.00px;transform:scaleX(0.9365);">0.20%</span>
<span class="t" style="left:26.68px;top:294.00px;transform:scaleX(0.9478);">unpack_sql_state</span>
<span class="t" style="left:220.06px;top:294.00px;transform:scaleX(0.9233);">0.12s</span>
<span class="t" style="left:308.05px;top:294.00px;transform:scaleX(0.9365);">0.14%</span>
<span class="t" style="left:26.37px;top:318.00px;">MemoryContextSwitchTo</span>
<span class="t" style="left:220.06px;top:318.00px;transform:scaleX(0.9233);">0.07s</span>
<span class="t" style="left:308.05px;top:318.00px;transform:scaleX(0.9365);">0.09%</span>
<span class="t" style="left:26.98px;top:342.00px;transform:scaleX(0.9707);">exception_matches_condit...</span>
<span class="t" style="left:220.06px;top:342.00px;transform:scaleX(0.9233);">0.04s</span>
<span class="t" style="left:308.05px;top:342.00px;transform:scaleX(0.9365);">0.04%</span>
<span class="t" style="left:27.82px;top:366.00px;transform:scaleX(0.9622);">_intrinsic_setjmp</span>
<span class="t" style="left:220.06px;top:366.00px;transform:scaleX(0.9233);">0.04s</span>
<span class="t" style="left:308.05px;top:366.00px;transform:scaleX(0.9365);">0.04%</span>
<span class="t" style="left:26.38px;top:390.00px;transform:scaleX(0.9915);">MemoryContextDeleteChi...</span>
<span class="t" style="left:220.06px;top:390.00px;transform:scaleX(0.9233);">0.02s</span>
<span class="t" style="left:308.05px;top:390.00px;transform:scaleX(0.9365);">0.02%</span>
</div>
<div style="left:1892px;top:564px;width:20px;height:409px;background:#f0f0f0;"></div><div style="left:1892px;top:585px;width:19px;height:294px;background:#cdcdcd;"></div><svg style="left:1896.7px;top:571.0px" width="10" height="7" viewBox="0 0 10 7"><polyline points="1.1,5.4 5,1.5000000000000004 8.9,5.4" fill="none" stroke="#585858" stroke-width="2.1"/></svg><svg style="left:1896.7px;top:959.0px" width="10" height="7" viewBox="0 0 10 7"><polyline points="1.1,1.6 5,5.5 8.9,1.6" fill="none" stroke="#585858" stroke-width="2.1"/></svg>
<div style="left:1502px;top:974px;width:390px;height:20px;background:#f0f0f0;"></div><div style="left:1523px;top:974px;width:138px;height:19px;background:#cdcdcd;"></div><svg style="left:1508.2px;top:978.7px" width="7" height="10" viewBox="0 0 7 10"><polyline points="5.4,1.1 1.5000000000000004,5 5.4,8.9" fill="none" stroke="#585858" stroke-width="2.1"/></svg><svg style="left:1878.8px;top:978.7px" width="7" height="10" viewBox="0 0 7 10"><polyline points="1.6,1.1 5.5,5 1.6,8.9" fill="none" stroke="#585858" stroke-width="2.1"/></svg>
<div style="left:1892px;top:974px;width:20px;height:20px;background:#f0f0f0;"></div>
<div style="left:0px;top:1002px;width:1920px;height:28px;background:#f0f0f0;"></div>
<div style="left:0px;top:1001px;width:1489px;height:1px;background:#d4d4d4;"></div>
<span class="t" style="left:2.11px;top:1008.00px;transform:scaleX(1.0115);">Source file: C:\dll\postgres\postgres\src\pl\plpgsql\src\pl_exec.c</span>
<div style="left:950px;top:1004px;width:1px;height:25px;background:#d0d0d0;"></div>
<span class="t" style="left:954.71px;top:1008.00px;transform:scaleX(0.9652);">Line 1627</span>
<div style="left:1919px;top:1004px;width:1px;height:25px;background:#d0d0d0;"></div>
<div style="left:0px;top:1030px;width:1920px;height:50px;background:linear-gradient(90deg,#d1e6ee 0%,#d0e6ef 30%,#d2e2ed 52%,#d5dfea 78%,#d7dcea 100%);"></div>
<div style="left:496px;top:1030px;width:61px;height:50px;background:rgba(255,255,255,.55);"></div>
<div style="left:315px;top:1077px;width:51px;height:3px;background:#0078d7;"></div>
<div style="left:377px;top:1077px;width:51px;height:3px;background:#0078d7;"></div>
<div style="left:439px;top:1077px;width:51px;height:3px;background:#0078d7;"></div>
<div style="left:496px;top:1077px;width:61px;height:3px;background:#0078d7;"></div>
<svg style="left:0px;top:1030px" width="120" height="50" viewBox="0 1030 120 50">
<path d="M20 1047.300l7.800-1.100v7.600H20z M29.100 1046l11.100-1.500v9.300H29.100z M20 1055h7.800v7.600L20 1061.500z M29.100 1055h11.100v10L29.100 1063.300z" fill="#000"/>
<g fill="none" stroke="#000" stroke-width="1.250"><path d="M80.500 1045.100v3.400h12v-3.400 M80.500 1064.100v-3.600h12v3.600 M80.500 1050.500h12v8H80.500z M98.500 1045.100v5.400 M98.500 1055.300v8.800"/></g>
<rect x="97.100" y="1051.100" width="2.900" height="3.200" fill="#000"/></svg>
<svg style="left:138px;top:1039px" width="32" height="32" viewBox="0 0 32 32">
<defs><linearGradient id="eg1" x1="0" y1="0" x2="1" y2="0"><stop offset="0" stop-color="#37b9f6"/><stop offset=".5" stop-color="#2cc3d0"/><stop offset=".8" stop-color="#4fd58a"/><stop offset="1" stop-color="#6ee23f"/></linearGradient>
<linearGradient id="eg2" x1="0" y1="0" x2="0" y2="1"><stop offset="0" stop-color="#1c9ae0"/><stop offset="1" stop-color="#0568c0"/></linearGradient>
<linearGradient id="eg3" x1="0" y1="0" x2="1" y2="1"><stop offset="0" stop-color="#0c4f94"/><stop offset="1" stop-color="#12559e"/></linearGradient></defs>
<path d="M1.4 13.2C3 5.500 9.500 1 16 1c9 0 15.200 6 15.200 13.200 0 5-3.700 7.400-7.400 7.400-3 0-5.800-1.200-5.300-2.800.4-1.200 1.200-2 1.200-3.800 0-3.200-3.200-6.200-7.700-6.600C7.500 8 3.200 10.200 1.400 13.200z" fill="url(#eg1)"/>
<path d="M1.400 13.200C3.200 10.200 7.500 8 12 8.400c4 .4 7 2.800 7.600 5.800-2-1.900-5.500-2.200-7.400-.2-3 3.200-3 9 1 13 2 2.200 4.800 3.400 7.300 3.500-1.600.5-3.100.6-4.500.6C7.500 31.100 1 24.500 1 16.500c0-1.200.1-2.300.4-3.300z" fill="url(#eg2)"/>
<path d="M12.200 14c-3 3.200-3 9 1 13 4 3.800 10 3.300 13.500-.8 1-1.100 1.900-2.500 2.300-3.400-.4-.5-1-.5-1.700 0-3.300 1.900-8.300 1.300-11.300-1.300-3-2.400-4.500-5.300-3.800-7.500z" fill="url(#eg3)"/>
</svg>
<svg style="left:202px;top:1043px" width="28" height="24" viewBox="0 0 28 24">
<path d="M0 1.200C0 .5.500 0 1.200 0h10.300l1.800 2.200H0z" fill="#e6a500"/><rect x="0" y="2" width="27.500" height="19.500" rx="1" fill="#ffd866"/>
<path d="M5 23V14c0-1 .8-1.800 1.800-1.800h14.400c1 0 1.800.8 1.800 1.800v9h-4v-7H9v7z" fill="#3a8fda"/></svg>
<svg style="left:262px;top:1039px" width="32" height="32" viewBox="0 0 32 32">
<path d="M8.300 9.500V4.300c0-1.300 1-2.300 2.300-2.300h10.800c1.300 0 2.300 1 2.300 2.300v5.200" fill="none" stroke="#1e1e1e" stroke-width="2.600"/>
<rect x="1.200" y="8.800" width="28.800" height="22.400" rx="1" fill="#2a2a2a"/>
<rect x="10" y="15" width="5.400" height="5.400" fill="#f25022"/><rect x="16.200" y="15" width="5.400" height="5.400" fill="#7fba00"/>
<rect x="10" y="21.200" width="5.400" height="5.400" fill="#00a4ef"/><rect x="16.200" y="21.200" width="5.400" height="5.400" fill="#ffb900"/></svg>
<svg style="left:325px;top:1042px" width="29" height="24" viewBox="-1 -1 29 24">
<rect x="-.5" y="-.3" width="28" height="23" rx="1.200" fill="#9fb0bd" opacity=".55"/>
<rect x=".3" y=".3" width="26.400" height="21.400" rx=".8" fill="#000"/><rect x=".3" y=".3" width="26.400" height="2" fill="#b9b9bb"/>
<path d="M.8 2.300h25.400v3.500C15 6.500 5 9 .8 14z" fill="#fff" opacity=".2"/>
<text x="2.400" y="8.300" font-family="Liberation Mono,monospace" font-weight="bold" font-size="5.500" textLength="14.500" lengthAdjust="spacingAndGlyphs" fill="#d8d8d8">C:\_</text></svg>
<svg style="left:387px;top:1042px" width="29" height="24" viewBox="-1 -1 29 24">
<rect x="-.5" y="-.3" width="28" height="23" rx="1.200" fill="#9fb0bd" opacity=".55"/>
<rect x=".3" y=".3" width="26.400" height="21.400" rx=".8" fill="#000"/><rect x=".3" y=".3" width="26.400" height="2" fill="#b9b9bb"/>
<path d="M.8 2.300h25.400v3.500C15 6.500 5 9 .8 14z" fill="#fff" opacity=".2"/>
<text x="2.400" y="8.300" font-family="Liberation Mono,monospace" font-weight="bold" font-size="5.500" textLength="14.500" lengthAdjust="spacingAndGlyphs" fill="#d8d8d8">C:\_</text></svg>
<svg style="left:449px;top:1040px" width="30" height="30" viewBox="0 0 30 30">
<defs><linearGradient id="npg" x1="0" y1="0" x2="0" y2="1"><stop offset="0" stop-color="#e6f25a"/><stop offset=".45" stop-color="#8fdc2a"/><stop offset="1" stop-color="#1ea022"/></linearGradient></defs>
<path d="M1.500 2h13.500l7.500 6.500 1 19.500-22 .5z" fill="#f6f7f5" stroke="#b9bdb8" stroke-width=".8"/>
<path d="M15 2v5.500l7.500 1z" fill="#dfe2df"/>
<path d="M2.200 12h20.300l.8 15.600-21.100.4z" fill="url(#npg)"/>
<path d="M6 15c2-2.500 7-3 9.500-.5 1.500 1.500.5 3.500-1 4 1.500 1 1 3-1 3.500-2.500.6-5-.5-5.500-2-1.500 0-3-1-3-2.500 0-1 .5-2 1-2.500z" fill="#7ccf2e" stroke="#2a5a14" stroke-width=".8"/>
<circle cx="12.500" cy="11.500" r="2.100" fill="#f4f4f0" stroke="#566" stroke-width=".7"/><circle cx="10" cy="10.800" r="1.500" fill="#f4f4f0" stroke="#566" stroke-width=".6"/>
<path d="M4.500 17.500c3 1 8 1 11.500-.5M12 23l.5 3.500M15 24.500h2" stroke="#2a5a14" stroke-width=".8" fill="none"/>
<path d="M27.200 2.500 18 20.200l-.6 2.300 2-1.400L28.700 3.300z" fill="#f0b428" stroke="#9a6a14" stroke-width=".6"/><path d="M27.200 2.500l.8-1.500 1.500.8-.8 1.500z" fill="#c8505a"/>
</svg>
<svg style="left:510px;top:1039px" width="32" height="32" viewBox="0 0 32 32">
<rect x="11.300" y="1.400" width="6" height="2.600" rx="1" fill="#a08a2a" stroke="#6a5a18" stroke-width=".5"/>
<ellipse cx="15.600" cy="16.600" rx="14" ry="13" fill="#fff" stroke="#a68c24" stroke-width="1.500"/>
<path d="M15.800 19 17.500 8.500 M15.500 19h4" stroke="#555" stroke-width="1.200" fill="none"/>
<g fill="#888"><circle cx="8.500" cy="9" r=".7"/><circle cx="22.500" cy="8.800" r=".7"/><circle cx="5" cy="16.500" r=".7"/><circle cx="26.500" cy="14" r=".7"/><circle cx="15.500" cy="6.500" r=".7"/><circle cx="6.500" cy="23" r=".7"/><circle cx="27" cy="19.500" r=".7"/><circle cx="11" cy="6.800" r=".6"/></g>
<path d="M10.300 31.300h20.400v-1.600H10.300z" fill="#0a0a12"/>
<text x="10" y="30" font-family="Liberation Sans,sans-serif" font-weight="bold" font-style="italic" font-size="14.500" textLength="21" lengthAdjust="spacingAndGlyphs" fill="#7ab6ea" stroke="#2c4a70" stroke-width=".5">Zzz</text>
</svg>
<svg style="left:1610px;top:1036px" width="160" height="40" viewBox="1610 1036 160 40" fill="none" stroke="#000" stroke-width="1.200">
<path d="M1619.200 1058.700l7.800-7.800 7.800 7.800" stroke-width="1.400"/>
<rect x="1648.500" y="1050.500" width="17" height="10"/><rect x="1650.300" y="1052.300" width="8.700" height="6.400" fill="#000" stroke="none"/><path d="M1666.300 1053v4" stroke-width="1.500"/>
<rect x="1681.500" y="1050.500" width="9" height="8.800" rx="1.500"/><path d="M1690.500 1054.200l4.200-2.700v7l-4.200-2.700"/><path d="M1681.800 1047.900c3-2.200 7.300-2.200 10.200 0 M1681.800 1062c3 2.200 7.300 2.200 10.200 0" stroke-width="1"/>
<path d="M1711.800 1047.500h14.700v12.200h-16.900v-5.700 M1717.500 1059.700v2.800 M1714.200 1062.700h6.800 M1709.500 1053.800v9.200"/><rect x="1707.600" y="1047.600" width="3.800" height="5.800"/><path d="M1709.500 1049.300v2" stroke-width="1"/>
<path d="M1737.400 1051.400h2.700l3.500-3.400v13.800l-3.500-3.400h-2.700z"/><path d="M1747 1052c1.700 1.900 1.700 4.300 0 6.200"/><path d="M1750.300 1049.300c3 3.500 3 8.300 0 11.800" stroke="#6e7278" stroke-width="1"/><path d="M1753.500 1046.500c4.200 5 4.200 12.200 0 17.200" stroke="#a2a7b0" stroke-width="1"/>
</svg>
<span class="t" style="left:1790.65px;top:1034.00px;color:#111;transform:scaleX(0.9233);">10:28</span>
<span class="t" style="left:1770.05px;top:1057.00px;color:#111;transform:scaleX(0.9947);">22/08/2021</span>
<svg style="left:1868px;top:1044px" width="22" height="22" viewBox="0 0 22 22" fill="none" stroke="#000" stroke-width="1.200">
<path d="M1.700 1.700h18.800v15.800h-7.300L10.700 20.100 8.200 17.500H1.700z"/></svg>
<div style="left:1914px;top:1030px;width:1px;height:50px;background:#9aa0ac;"></div>
</body></html>
